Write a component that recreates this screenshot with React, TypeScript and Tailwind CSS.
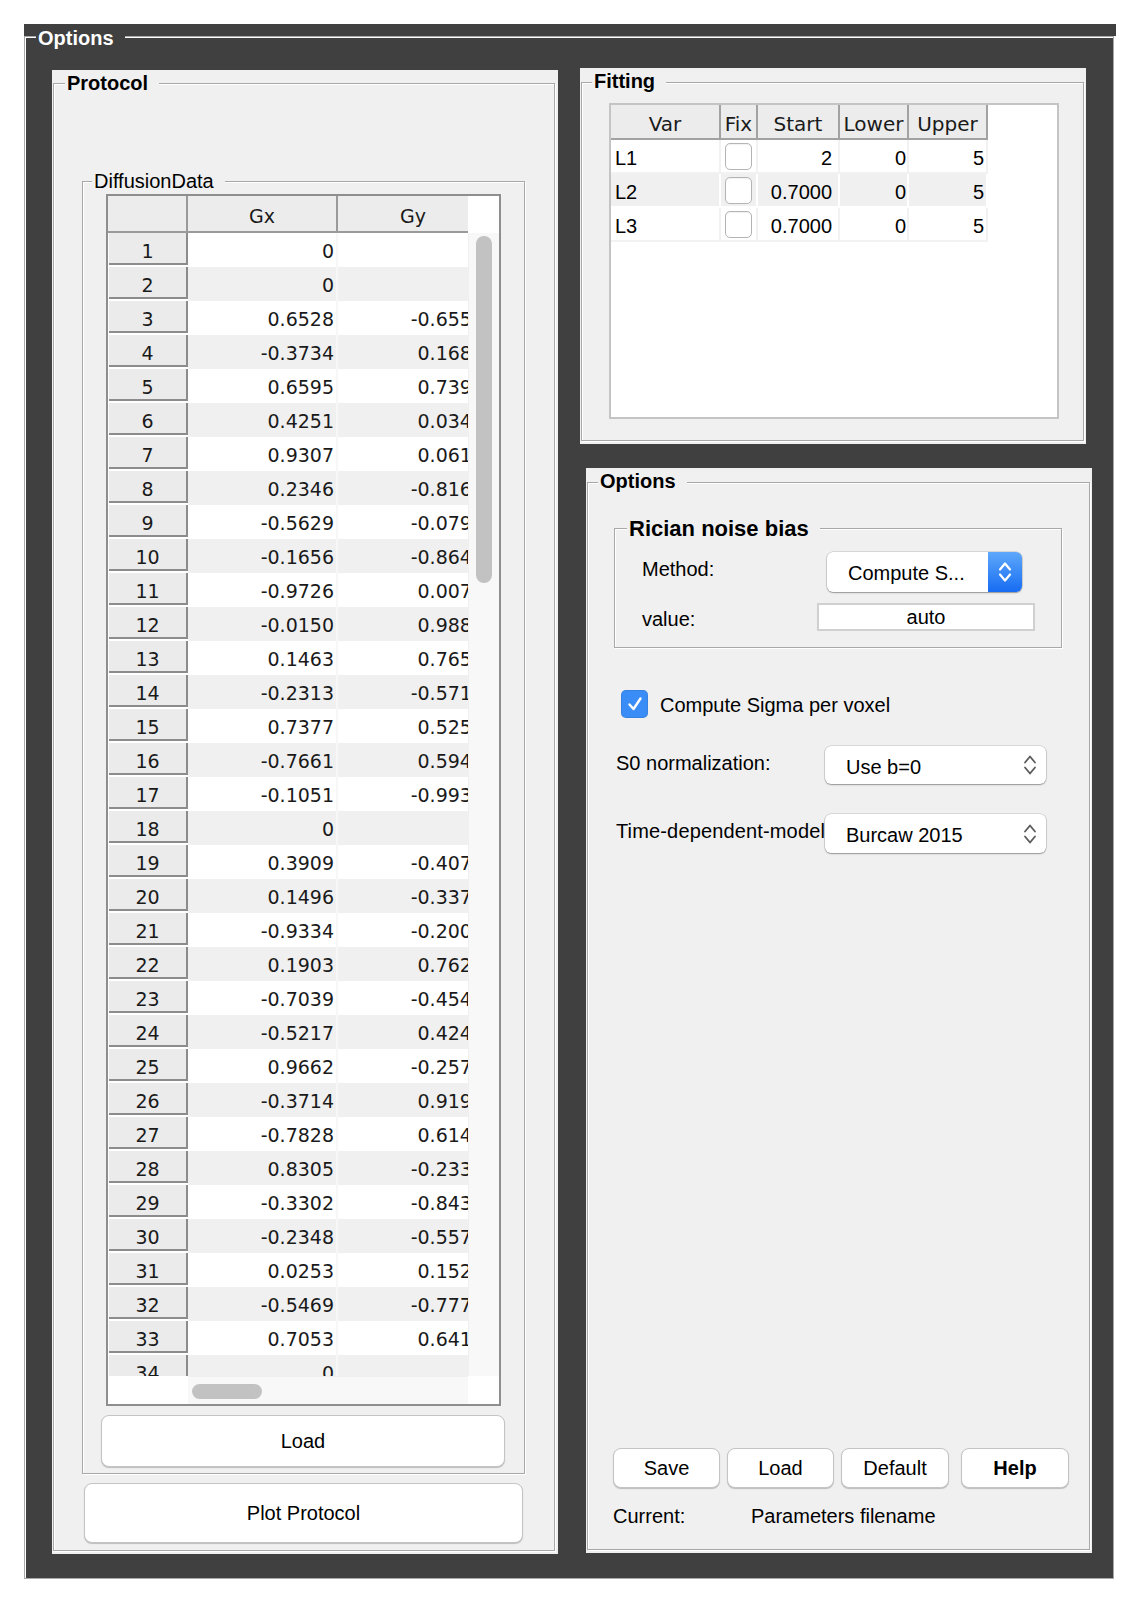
import React from 'react';

const GX = ['0', '0', '0.6528', '-0.3734', '0.6595', '0.4251', '0.9307', '0.2346', '-0.5629', '-0.1656', '-0.9726', '-0.0150', '0.1463', '-0.2313', '0.7377', '-0.7661', '-0.1051', '0', '0.3909', '0.1496', '-0.9334', '0.1903', '-0.7039', '-0.5217', '0.9662', '-0.3714', '-0.7828', '0.8305', '-0.3302', '-0.2348', '0.0253', '-0.5469', '0.7053', '0'];
const GY = ['0', '0', '-0.6553', '0.1685', '0.7391', '0.0342', '0.0617', '-0.8164', '-0.0792', '-0.8648', '0.0073', '0.9886', '0.7652', '-0.5718', '0.5253', '0.5941', '-0.9932', '0', '-0.4071', '-0.3378', '-0.2006', '0.7621', '-0.4547', '0.4242', '-0.2574', '0.9193', '0.6142', '-0.2336', '-0.8435', '-0.5577', '0.1523', '-0.7771', '0.6416', '0'];

const FIT = [
  { v: 'L1', s: '2', l: '0', u: '5' },
  { v: 'L2', s: '0.7000', l: '0', u: '5' },
  { v: 'L3', s: '0.7000', l: '0', u: '5' },
];

type GroupProps = { title: string; className?: string; titleClass?: string; children?: React.ReactNode };

// etched MATLAB-style uipanel border with its title sitting on the top line
const Group = ({ title, className = '', titleClass = '', children }: GroupProps) => (
  <div className={`relative border border-[#a8a8a8] shadow-[inset_1px_1px_0_#ffffff,1px_1px_0_#ffffff] ${className}`}>
    <span className={`absolute whitespace-nowrap pl-[2px] pr-[11px] ${titleClass}`}>{title}</span>
    {children}
  </div>
);

const Button = ({ label, className = '' }: { label: string; className?: string }) => (
  <button className={`flex items-center justify-center rounded-[8px] border border-[#c4c4c4] bg-white text-[20px] text-black shadow-[0_1px_1px_rgba(0,0,0,0.22)] ${className}`}>
    {label}
  </button>
);

const Chevrons = ({ color, width = 2 }: { color: string; width?: number }) => (
  <svg width="14" height="24" viewBox="0 0 14 24" fill="none" stroke={color} strokeWidth={width} strokeLinecap="round" strokeLinejoin="round">
    <polyline points="2,9.5 7,3.5 12,9.5" />
    <polyline points="2,14.5 7,20.5 12,14.5" />
  </svg>
);

const Popup = ({ label, className = '', blue = false, labelPad = 'pt-[4px]' }: { label: string; className?: string; blue?: boolean; labelPad?: string }) => (
  <div className={`flex items-center rounded-[6px] bg-white text-[20px] text-black shadow-[0_0_0_0.5px_rgba(0,0,0,0.2),0_1px_1.5px_rgba(0,0,0,0.3)] ${className}`}>
    <span className={`flex-1 whitespace-nowrap pl-[21px] leading-[24px] ${labelPad}`}>{label}</span>
    {blue ? (
      <span className="flex w-[34px] self-stretch items-center justify-center rounded-r-[6px] bg-[linear-gradient(to_bottom,#5ea8fb,#176cf2)]">
        <Chevrons color="#ffffff" width={2.2} />
      </span>
    ) : (
      <span className="flex items-center pr-[9px]">
        <Chevrons color="#5a5a5a" width={1.8} />
      </span>
    )}
  </div>
);

const DiffusionTable = () => (
  <div className="ml-[23px] mt-[12px] flex h-[1212px] w-[395px] flex-col border-2 border-[#8e8e8e] bg-white font-['DejaVu_Sans',sans-serif] text-[19px] text-[#1a1a1a]">
    <div className="flex h-[1180px]">
      <div className="w-[360px] overflow-hidden">
        <div className="flex h-[37px] w-[380px]">
          <div className="w-[80px] shrink-0 border-b-2 border-r-2 border-[#9a9a9a] bg-[#ececec]" />
          <div className="flex w-[150px] shrink-0 items-center justify-center border-b-2 border-r-2 border-[#9a9a9a] bg-[#ececec] pt-[5px]">Gx</div>
          <div className="flex w-[150px] shrink-0 items-center justify-center border-b-2 border-[#9a9a9a] bg-[#ececec] pt-[5px]">Gy</div>
        </div>
        {GX.map((x, i) => {
          const bg = i % 2 === 0 ? 'bg-white' : 'bg-[#f0f0f0]';
          return (
            <div key={i} className="flex h-[34px] w-[380px]">
              <div className="w-[80px] shrink-0 bg-white pb-[2px] pl-[1px]">
                <div className="h-full border-b-2 border-r-2 border-[#8c8c8c] bg-[#ebebeb] text-center leading-[37px]">{i + 1}</div>
              </div>
              <div className={`w-[150px] shrink-0 border-r-2 border-[#f7f7f7] pr-[2px] text-right leading-[37px] ${bg}`}>{x}</div>
              <div className={`w-[150px] shrink-0 pr-[4px] text-right leading-[37px] ${bg}`}>{GY[i]}</div>
            </div>
          );
        })}
      </div>
      <div className="flex w-[31px] flex-col">
        <div className="h-[37px] bg-white" />
        <div className="flex-1 border-l border-[#efefef] bg-[#f8f8f8]">
          <div className="ml-[7px] mt-[3px] h-[347px] w-[16px] rounded-full bg-[#c2c2c2]" />
        </div>
      </div>
    </div>
    <div className="flex h-[28px]">
      <div className="w-[80px] bg-white" />
      <div className="w-[280px] border-t border-[#efefef] bg-[#f8f8f8]">
        <div className="ml-[4px] mt-[7px] h-[15px] w-[70px] rounded-full bg-[#c2c2c2]" />
      </div>
      <div className="flex-1 bg-white" />
    </div>
  </div>
);

const FIT_COLS = ['w-[110px]', 'w-[37px]', 'w-[82px]', 'w-[69px]', 'w-[79px]'];
const FIT_HEAD = ['Var', 'Fix', 'Start', 'Lower', 'Upper'];

const FittingTable = () => (
  <div className="ml-[27px] mt-[20px] h-[316px] w-[450px] border-2 border-[#c4c4c4] bg-white">
    <div className="flex h-[35px] font-['DejaVu_Sans',sans-serif] text-[20px] text-[#1a1a1a]">
      {FIT_HEAD.map((h, i) => (
        <div key={h} className={`${FIT_COLS[i]} shrink-0 border-b-2 border-r-2 border-[#a2a2a2] bg-[#ececec] pt-[3px] text-center leading-[33px]`}>
          {h}
        </div>
      ))}
    </div>
    {FIT.map((r, i) => {
      const bg = i % 2 === 0 ? 'bg-white border-[#f2f2f2]' : 'bg-[#f0f0f0] border-white';
      return (
        <div key={r.v} className="flex h-[34px] text-[20px] leading-[36px] text-black">
          <div className={`${FIT_COLS[0]} shrink-0 border-b-2 border-r-2 pl-[4px] ${bg}`}>{r.v}</div>
          <div className={`${FIT_COLS[1]} shrink-0 border-b-2 border-r-2 pt-[3px] ${bg}`}>
            <div className="mx-auto h-[27px] w-[27px] rounded-[5px] border border-[#b4b4b4] bg-white shadow-[inset_0_1px_1px_rgba(0,0,0,0.06)]" />
          </div>
          <div className={`${FIT_COLS[2]} shrink-0 border-b-2 border-r-2 pr-[6px] text-right ${bg}`}>{r.s}</div>
          <div className={`${FIT_COLS[3]} shrink-0 border-b-2 border-r-2 pr-[1px] text-right ${bg}`}>{r.l}</div>
          <div className={`${FIT_COLS[4]} shrink-0 border-b-2 border-r-2 pr-[2px] text-right ${bg}`}>{r.u}</div>
        </div>
      );
    })}
  </div>
);

export default function App() {
  return (
    <div className="min-h-[1604px] w-[1138px] bg-white pl-[24px] pt-[24px] font-['Liberation_Sans',Arial,sans-serif] text-black">
      <div className="w-[1092px]">
        <div className="h-[12px] bg-[#404040]" />
        <Group
          title="Options"
          className="h-[1543px] w-[1090px] border-[#9c9c9c] bg-[#404040] shadow-[inset_1px_1px_0_#dcdcdc] pl-[27px] pt-[31px]"
          titleClass="-top-[11px] left-[11px] bg-[#404040] text-[20px] font-bold leading-[24px] text-white"
        >
          <div className="flex items-start">
            {/* Protocol */}
            <div className="mt-[2px] flex h-[1484px] w-[506px] bg-[#f0f0f0] pb-[3px] pl-[1px] pr-[3px] pt-[13px]">
              <Group
                title="Protocol"
                className="flex flex-1 flex-col"
                titleClass="-top-[13px] left-[11px] bg-[#f0f0f0] text-[20px] font-bold leading-[24px]"
              >
                <Group
                  title="DiffusionData"
                  className="ml-[28px] mt-[97px] flex h-[1293px] w-[443px] flex-col"
                  titleClass="-top-[13px] left-[9px] bg-[#f0f0f0] text-[20px] leading-[24px]"
                >
                  <DiffusionTable />
                  <Button label="Load" className="ml-[18px] mt-[9px] h-[52px] w-[404px]" />
                </Group>
                <Button label="Plot Protocol" className="ml-[30px] mt-[9px] h-[60px] w-[439px]" />
              </Group>
            </div>

            {/* right column */}
            <div className="ml-[22px] flex flex-col">
              <div className="flex h-[376px] w-[506px] bg-[#f0f0f0] pb-[3px] pl-[1px] pr-[2px] pt-[14px]">
                <Group
                  title="Fitting"
                  className="flex-1"
                  titleClass="-top-[14px] left-[10px] bg-[#f0f0f0] text-[20px] font-bold leading-[24px]"
                >
                  <FittingTable />
                </Group>
              </div>

              <div className="ml-[6px] mt-[24px] flex h-[1085px] w-[506px] bg-[#f0f0f0] pb-[3px] pl-[1px] pr-[2px] pt-[14px]">
                <Group
                  title="Options"
                  className="flex flex-1 flex-col text-[20px]"
                  titleClass="-top-[14px] left-[10px] bg-[#f0f0f0] text-[20px] font-bold leading-[24px]"
                >
                  <Group
                    title="Rician noise bias"
                    className="ml-[26px] mt-[45px] h-[120px] w-[448px]"
                    titleClass="-top-[13px] left-[12px] bg-[#f0f0f0] text-[22px] font-bold leading-[26px]"
                  >
                    <div className="mt-[23px] flex">
                      <div className="w-[212px] pl-[27px] pt-[5px] leading-[24px]">Method:</div>
                      <Popup label="Compute S..." blue className="h-[40px] w-[195px]" labelPad="pt-[2px]" />
                    </div>
                    <div className="mt-[11px] flex">
                      <div className="w-[202px] pl-[27px] pt-[4px] leading-[24px]">value:</div>
                      <div className="flex h-[28px] w-[218px] items-center justify-center border-2 border-[#d0d0d0] bg-white leading-[24px]">auto</div>
                    </div>
                  </Group>

                  <div className="ml-[33px] mt-[42px] flex h-[28px] items-center">
                    <div className="flex h-[28px] w-[27px] items-center justify-center rounded-[5px] bg-[#3a8df6] shadow-[inset_0_0_0_0.5px_rgba(0,0,0,0.15)]">
                      <svg width="18" height="18" viewBox="0 0 18 18" fill="none" stroke="#ffffff" strokeWidth="2.4" strokeLinecap="round" strokeLinejoin="round">
                        <polyline points="3.5,9.5 7.5,14 14.5,3.5" />
                      </svg>
                    </div>
                    <span className="ml-[12px] pt-[2px] leading-[24px]">Compute Sigma per voxel</span>
                  </div>

                  <div className="ml-[28px] mt-[28px] flex">
                    <div className="w-[209px] whitespace-nowrap pt-[5px] leading-[24px]">S0 normalization:</div>
                    <Popup label="Use b=0" className="h-[38px] w-[221px]" />
                  </div>

                  <div className="ml-[28px] mt-[30px] flex">
                    <div className="w-[209px] whitespace-nowrap pt-[5px] leading-[24px] tracking-[0.15px]">Time-dependent-model</div>
                    <Popup label="Burcaw 2015" className="relative z-10 h-[39px] w-[221px]" labelPad="pt-[3px]" />
                  </div>

                  <div className="ml-[25px] mt-auto flex">
                    <Button label="Save" className="h-[40px] w-[107px]" />
                    <Button label="Load" className="ml-[7px] h-[40px] w-[107px]" />
                    <Button label="Default" className="ml-[7px] h-[40px] w-[108px]" />
                    <Button label="Help" className="ml-[12px] h-[40px] w-[108px] font-bold" />
                  </div>
                  <div className="mb-[21px] ml-[25px] mt-[16px] flex leading-[24px]">
                    <span className="w-[138px]">Current:</span>
                    <span>Parameters filename</span>
                  </div>
                </Group>
              </div>
            </div>
          </div>
        </Group>
      </div>
    </div>
  );
}
